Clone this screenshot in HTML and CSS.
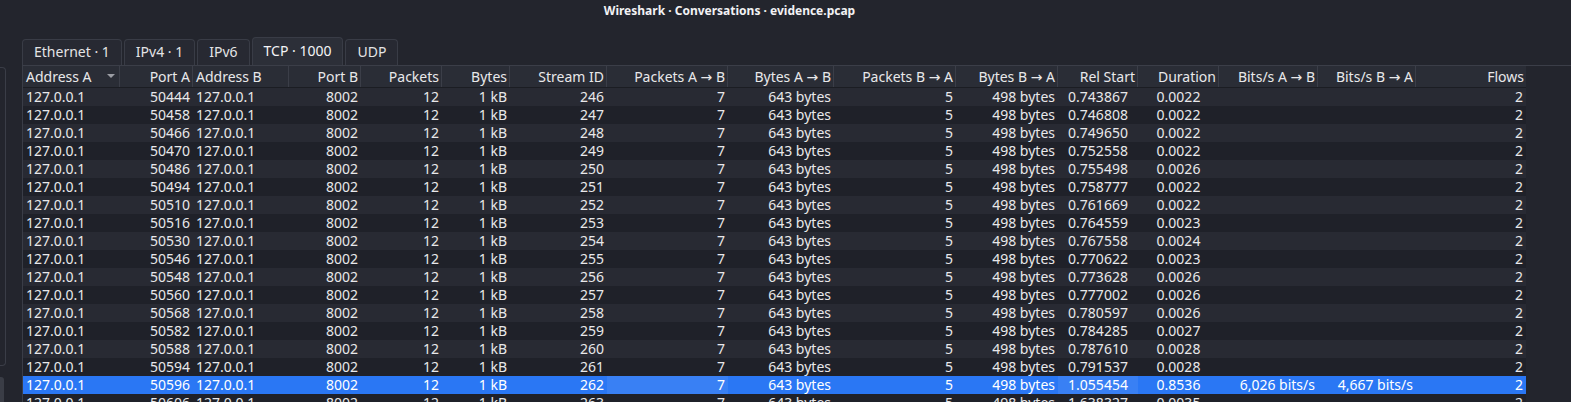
FILE: index.html
```html
<!DOCTYPE html>
<html>
<head>
<meta charset="utf-8">
<link rel="stylesheet" href="styles.css">
</head>
<body>
<div class="window">
  <div class="titlebar">Wireshark · Conversations · evidence.pcap</div>
  <div class="layout">
    <div class="sidebar">
      <div class="side-panel"></div>
      <div class="side-btn"></div>
    </div>
    <div class="content">
      <div class="tabs">
        <div class="tab">Ethernet · 1</div>
        <div class="tab">IPv4 · 1</div>
        <div class="tab">IPv6</div>
        <div class="tab active">TCP · 1000</div>
        <div class="tab">UDP</div>
      </div>
      <div class="pane">
        <div class="table">
          <div class="row head">
            <div class="l sort">Address A<span class="arrow"></span></div>
            <div class="r">Port A</div>
            <div class="l">Address B</div>
            <div class="r">Port B</div>
            <div class="r">Packets</div>
            <div class="r">Bytes</div>
            <div class="r">Stream ID</div>
            <div class="r">Packets A → B</div>
            <div class="r">Bytes A → B</div>
            <div class="r">Packets B → A</div>
            <div class="r">Bytes B → A</div>
            <div class="r">Rel Start</div>
            <div class="r">Duration</div>
            <div class="r">Bits/s A → B</div>
            <div class="r">Bits/s B → A</div>
            <div class="r">Flows</div>
          </div>
          <div class="row even"><div class="l">127.0.0.1</div><div class="r">50444</div><div class="l">127.0.0.1</div><div class="r">8002</div><div class="r">12</div><div class="r">1 kB</div><div class="r">246</div><div class="r">7</div><div class="r">643 bytes</div><div class="r">5</div><div class="r">498 bytes</div><div class="c">0.743867</div><div class="c">0.0022</div><div class="r"></div><div class="r"></div><div class="r">2</div></div>
          <div class="row odd"><div class="l">127.0.0.1</div><div class="r">50458</div><div class="l">127.0.0.1</div><div class="r">8002</div><div class="r">12</div><div class="r">1 kB</div><div class="r">247</div><div class="r">7</div><div class="r">643 bytes</div><div class="r">5</div><div class="r">498 bytes</div><div class="c">0.746808</div><div class="c">0.0022</div><div class="r"></div><div class="r"></div><div class="r">2</div></div>
          <div class="row even"><div class="l">127.0.0.1</div><div class="r">50466</div><div class="l">127.0.0.1</div><div class="r">8002</div><div class="r">12</div><div class="r">1 kB</div><div class="r">248</div><div class="r">7</div><div class="r">643 bytes</div><div class="r">5</div><div class="r">498 bytes</div><div class="c">0.749650</div><div class="c">0.0022</div><div class="r"></div><div class="r"></div><div class="r">2</div></div>
          <div class="row odd"><div class="l">127.0.0.1</div><div class="r">50470</div><div class="l">127.0.0.1</div><div class="r">8002</div><div class="r">12</div><div class="r">1 kB</div><div class="r">249</div><div class="r">7</div><div class="r">643 bytes</div><div class="r">5</div><div class="r">498 bytes</div><div class="c">0.752558</div><div class="c">0.0022</div><div class="r"></div><div class="r"></div><div class="r">2</div></div>
          <div class="row even"><div class="l">127.0.0.1</div><div class="r">50486</div><div class="l">127.0.0.1</div><div class="r">8002</div><div class="r">12</div><div class="r">1 kB</div><div class="r">250</div><div class="r">7</div><div class="r">643 bytes</div><div class="r">5</div><div class="r">498 bytes</div><div class="c">0.755498</div><div class="c">0.0026</div><div class="r"></div><div class="r"></div><div class="r">2</div></div>
          <div class="row odd"><div class="l">127.0.0.1</div><div class="r">50494</div><div class="l">127.0.0.1</div><div class="r">8002</div><div class="r">12</div><div class="r">1 kB</div><div class="r">251</div><div class="r">7</div><div class="r">643 bytes</div><div class="r">5</div><div class="r">498 bytes</div><div class="c">0.758777</div><div class="c">0.0022</div><div class="r"></div><div class="r"></div><div class="r">2</div></div>
          <div class="row even"><div class="l">127.0.0.1</div><div class="r">50510</div><div class="l">127.0.0.1</div><div class="r">8002</div><div class="r">12</div><div class="r">1 kB</div><div class="r">252</div><div class="r">7</div><div class="r">643 bytes</div><div class="r">5</div><div class="r">498 bytes</div><div class="c">0.761669</div><div class="c">0.0022</div><div class="r"></div><div class="r"></div><div class="r">2</div></div>
          <div class="row odd"><div class="l">127.0.0.1</div><div class="r">50516</div><div class="l">127.0.0.1</div><div class="r">8002</div><div class="r">12</div><div class="r">1 kB</div><div class="r">253</div><div class="r">7</div><div class="r">643 bytes</div><div class="r">5</div><div class="r">498 bytes</div><div class="c">0.764559</div><div class="c">0.0023</div><div class="r"></div><div class="r"></div><div class="r">2</div></div>
          <div class="row even"><div class="l">127.0.0.1</div><div class="r">50530</div><div class="l">127.0.0.1</div><div class="r">8002</div><div class="r">12</div><div class="r">1 kB</div><div class="r">254</div><div class="r">7</div><div class="r">643 bytes</div><div class="r">5</div><div class="r">498 bytes</div><div class="c">0.767558</div><div class="c">0.0024</div><div class="r"></div><div class="r"></div><div class="r">2</div></div>
          <div class="row odd"><div class="l">127.0.0.1</div><div class="r">50546</div><div class="l">127.0.0.1</div><div class="r">8002</div><div class="r">12</div><div class="r">1 kB</div><div class="r">255</div><div class="r">7</div><div class="r">643 bytes</div><div class="r">5</div><div class="r">498 bytes</div><div class="c">0.770622</div><div class="c">0.0023</div><div class="r"></div><div class="r"></div><div class="r">2</div></div>
          <div class="row even"><div class="l">127.0.0.1</div><div class="r">50548</div><div class="l">127.0.0.1</div><div class="r">8002</div><div class="r">12</div><div class="r">1 kB</div><div class="r">256</div><div class="r">7</div><div class="r">643 bytes</div><div class="r">5</div><div class="r">498 bytes</div><div class="c">0.773628</div><div class="c">0.0026</div><div class="r"></div><div class="r"></div><div class="r">2</div></div>
          <div class="row odd"><div class="l">127.0.0.1</div><div class="r">50560</div><div class="l">127.0.0.1</div><div class="r">8002</div><div class="r">12</div><div class="r">1 kB</div><div class="r">257</div><div class="r">7</div><div class="r">643 bytes</div><div class="r">5</div><div class="r">498 bytes</div><div class="c">0.777002</div><div class="c">0.0026</div><div class="r"></div><div class="r"></div><div class="r">2</div></div>
          <div class="row even"><div class="l">127.0.0.1</div><div class="r">50568</div><div class="l">127.0.0.1</div><div class="r">8002</div><div class="r">12</div><div class="r">1 kB</div><div class="r">258</div><div class="r">7</div><div class="r">643 bytes</div><div class="r">5</div><div class="r">498 bytes</div><div class="c">0.780597</div><div class="c">0.0026</div><div class="r"></div><div class="r"></div><div class="r">2</div></div>
          <div class="row odd"><div class="l">127.0.0.1</div><div class="r">50582</div><div class="l">127.0.0.1</div><div class="r">8002</div><div class="r">12</div><div class="r">1 kB</div><div class="r">259</div><div class="r">7</div><div class="r">643 bytes</div><div class="r">5</div><div class="r">498 bytes</div><div class="c">0.784285</div><div class="c">0.0027</div><div class="r"></div><div class="r"></div><div class="r">2</div></div>
          <div class="row even"><div class="l">127.0.0.1</div><div class="r">50588</div><div class="l">127.0.0.1</div><div class="r">8002</div><div class="r">12</div><div class="r">1 kB</div><div class="r">260</div><div class="r">7</div><div class="r">643 bytes</div><div class="r">5</div><div class="r">498 bytes</div><div class="c">0.787610</div><div class="c">0.0028</div><div class="r"></div><div class="r"></div><div class="r">2</div></div>
          <div class="row odd"><div class="l">127.0.0.1</div><div class="r">50594</div><div class="l">127.0.0.1</div><div class="r">8002</div><div class="r">12</div><div class="r">1 kB</div><div class="r">261</div><div class="r">7</div><div class="r">643 bytes</div><div class="r">5</div><div class="r">498 bytes</div><div class="c">0.791537</div><div class="c">0.0028</div><div class="r"></div><div class="r"></div><div class="r">2</div></div>
          <div class="row selected"><div class="l">127.0.0.1</div><div class="r">50596</div><div class="l">127.0.0.1</div><div class="r">8002</div><div class="r">12</div><div class="r">1 kB</div><div class="r">262</div><div class="r hl">7</div><div class="r">643 bytes</div><div class="r">5</div><div class="r">498 bytes</div><div class="c hl">1.055454</div><div class="c">0.8536</div><div class="r">6,026 bits/s</div><div class="r">4,667 bits/s</div><div class="r">2</div></div>
          <div class="row odd"><div class="l">127.0.0.1</div><div class="r">50606</div><div class="l">127.0.0.1</div><div class="r">8002</div><div class="r">12</div><div class="r">1 kB</div><div class="r">263</div><div class="r">7</div><div class="r">643 bytes</div><div class="r">5</div><div class="r">498 bytes</div><div class="c">1.638327</div><div class="c">0.0035</div><div class="r"></div><div class="r"></div><div class="r">2</div></div>
        </div>
      </div>
    </div>
  </div>
</div>
</body>
</html>
```
FILE: styles.css
```css
* { box-sizing: border-box; }
html, body {
  margin: 0;
  padding: 0;
  background: #23252d;
  overflow: hidden;
}
.window {
  width: 1571px;
  height: 402px;
  overflow: hidden;
  background: #23252d;
  color: #e8e8ea;
  font-family: "Noto Sans", "DejaVu Sans", sans-serif;
  font-size: 14px;
}
.titlebar {
  height: 22px;
  line-height: 21px;
  text-align: center;
  font-size: 12px;
  font-weight: bold;
  color: #f2f2f4;
  padding-right: 112px;
}
.layout {
  display: flex;
  height: 380px;
  overflow: hidden;
}
.sidebar {
  width: 6px;
  flex: none;
  display: flex;
  flex-direction: column;
}
.side-panel {
  flex: none;
  margin-top: 45px;
  height: 299px;
  border: 1px solid #3a3d47;
  border-left: none;
  border-radius: 0 4px 4px 0;
}
.side-btn {
  flex: none;
  margin-top: 11px;
  width: 4px;
  height: 30px;
  background: #3a3d46;
  border-radius: 0 3px 3px 0;
}
.content {
  flex: 1;
  min-width: 0;
  margin-left: 16px;
  display: flex;
  flex-direction: column;
}
.tabs {
  flex: none;
  height: 43px;
  display: flex;
  align-items: flex-end;
  gap: 2px;
}
.tab {
  height: 26px;
  line-height: 24px;
  padding: 0 11px;
  background: #272932;
  border: 1px solid #393c46;
  border-bottom: none;
  border-radius: 4px 4px 0 0;
  color: #e4e4e6;
}
.tab.active {
  height: 28px;
  line-height: 26px;
  background: #2c2f38;
  color: #f4f4f6;
}
.pane {
  flex: 1;
  min-height: 0;
  overflow: hidden;
  border-top: 1px solid #3b3e48;
}
.table {
  width: 1504px;
  border-left: 1px solid #3a3d47;
}
.row {
  display: grid;
  grid-template-columns: 97px 73px 96px 72px 81px 68px 97px 121px 106px 122px 102px 80px 81px 99px 98px 110px;
  height: 18px;
  line-height: 18px;
  white-space: nowrap;
}
.row > div {
  padding: 0 3px 0 3px;
  overflow: hidden;
}
.row .l { text-align: left; }
.row .r { text-align: right; }
.row .c { text-align: center; }
.row.head {
  height: 22px;
  line-height: 22px;
  background: #2a2d36;
  border-bottom: 1px solid #1b1d23;
}
.row.head > div {
  border-right: 1px solid #3b3e48;
  padding: 0 2px 0 3px;
  text-align: right;
  line-height: 21px;
}
.row.head > div.l { text-align: left; }
.row.head > div:last-child { border-right: none; }
.sort { position: relative; }
.arrow {
  position: absolute;
  right: 4px;
  top: 8px;
  width: 0;
  height: 0;
  border-left: 4px solid transparent;
  border-right: 4px solid transparent;
  border-top: 4px solid #9b9da4;
}
.row.even { background: #282a33; }
.row.odd { background: #1f2129; }
.row.selected { background: #2a77f4; color: #ffffff; }
.row .hl { background: rgba(255, 255, 255, 0.07); }
```
